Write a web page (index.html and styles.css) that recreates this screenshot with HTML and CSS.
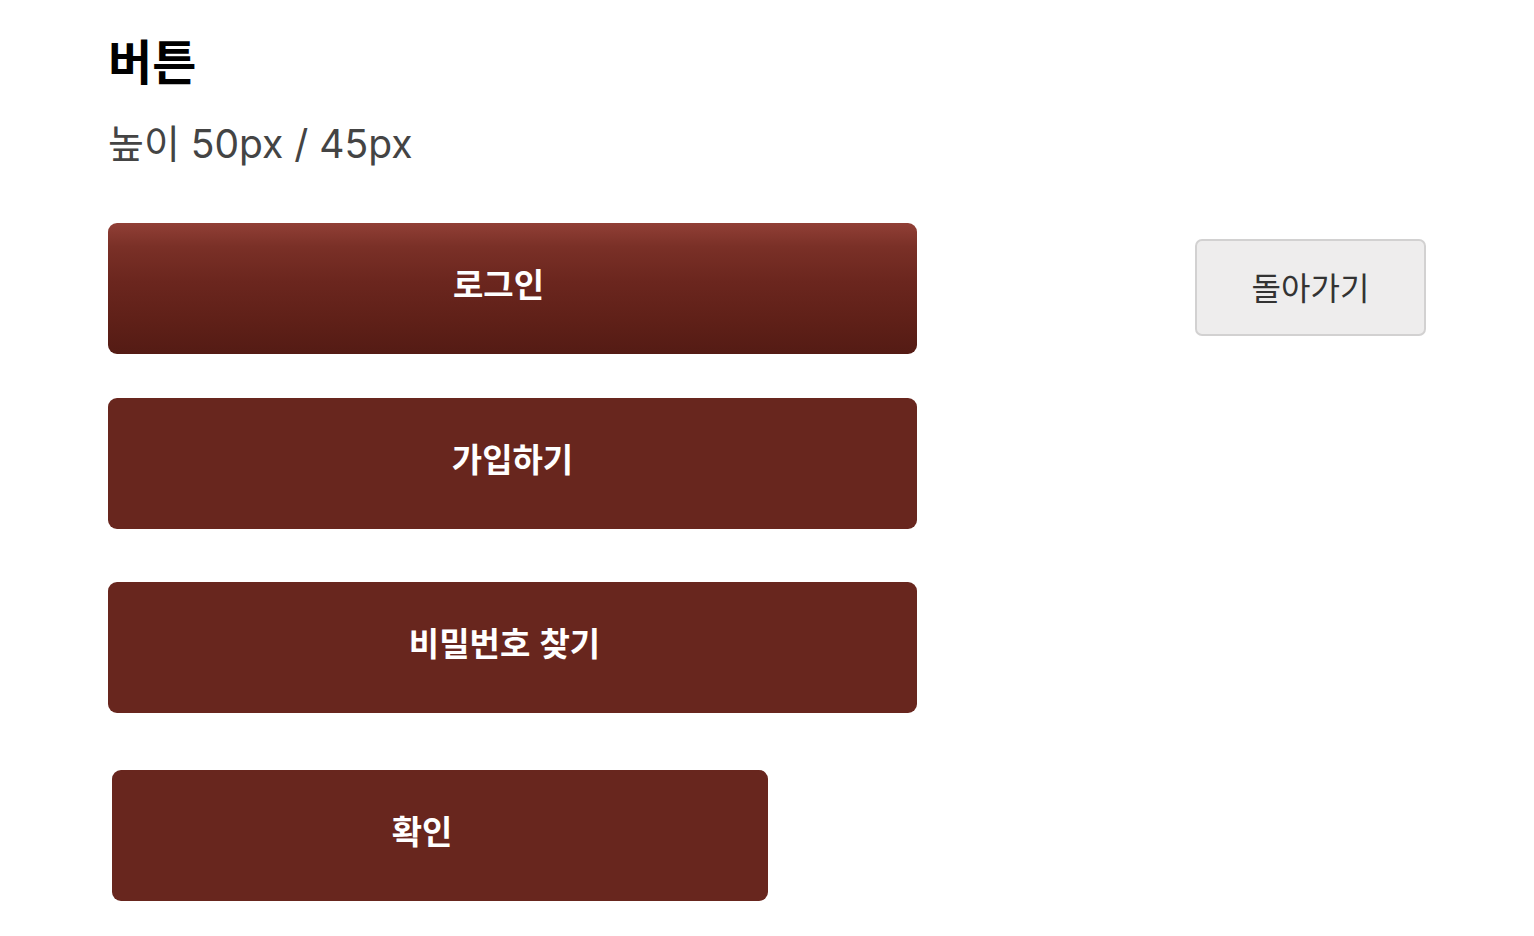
FILE: index.html
```html
<!DOCTYPE html>
<html lang="ko">
<head>
<meta charset="utf-8">
<link rel="stylesheet" href="styles.css">
</head>
<body>
<div class="page">
  <h1 class="title">버튼</h1>
  <p class="subtitle">높이 50px / 45px</p>
  <div class="row">
    <div class="col">
      <button class="btn btn-grad">로그인</button>
      <button class="btn btn-join">가입하기</button>
      <button class="btn btn-find">비밀번호 찾기</button>
      <button class="btn btn-ok">확인</button>
    </div>
    <button class="back">돌아가기</button>
  </div>
</div>
</body>
</html>
```
FILE: styles.css
```css
* { box-sizing: border-box; }
html, body { margin: 0; padding: 0; background: #fff; }
body {
  font-family: "Inter", "Noto Sans CJK KR", sans-serif;
}
.page {
  padding: 0 108px;
}
.title {
  margin: 0;
  padding-top: 30px;
  font-size: 48px;
  line-height: 58px;
  font-weight: 700;
  color: #000;
  font-family: "Noto Sans CJK KR", sans-serif;
}
.subtitle {
  margin: 0;
  padding-top: 33px;
  font-size: 39px;
  line-height: 46px;
  color: #444;
  font-weight: 400;
}
.row {
  display: flex;
  justify-content: space-between;
  align-items: flex-start;
  margin-top: 56px;
}
.col {
  display: flex;
  flex-direction: column;
  width: 809px;
}
.btn {
  display: flex;
  align-items: center;
  justify-content: center;
  width: 809px;
  height: 131px;
  border: none;
  border-radius: 9px;
  background: #68261e;
  color: #fff;
  font-family: "Noto Sans CJK KR", sans-serif;
  font-size: 33px;
  font-weight: 700;
  padding: 0 0 11px 0;
}
.btn-grad {
  background: linear-gradient(to bottom, #913f36 0%, #7a3027 18%, #6b261e 45%, #5f2018 75%, #541b14 100%);
  padding-right: 28px;
}
.btn-join { margin-top: 44px; }
.btn-find { margin-top: 53px; padding-right: 16px; }
.btn-ok {
  margin-top: 57px;
  margin-left: 4px;
  width: 656px;
  padding-right: 36px;
}
.back {
  margin-top: 16px;
  width: 231px;
  height: 97px;
  background: #eeeded;
  border: 2px solid #d2d1d1;
  border-radius: 7px;
  color: #333;
  font-family: "Noto Sans CJK KR", sans-serif;
  font-size: 32px;
  font-weight: 400;
  padding: 0 0 4px 0;
}
```
